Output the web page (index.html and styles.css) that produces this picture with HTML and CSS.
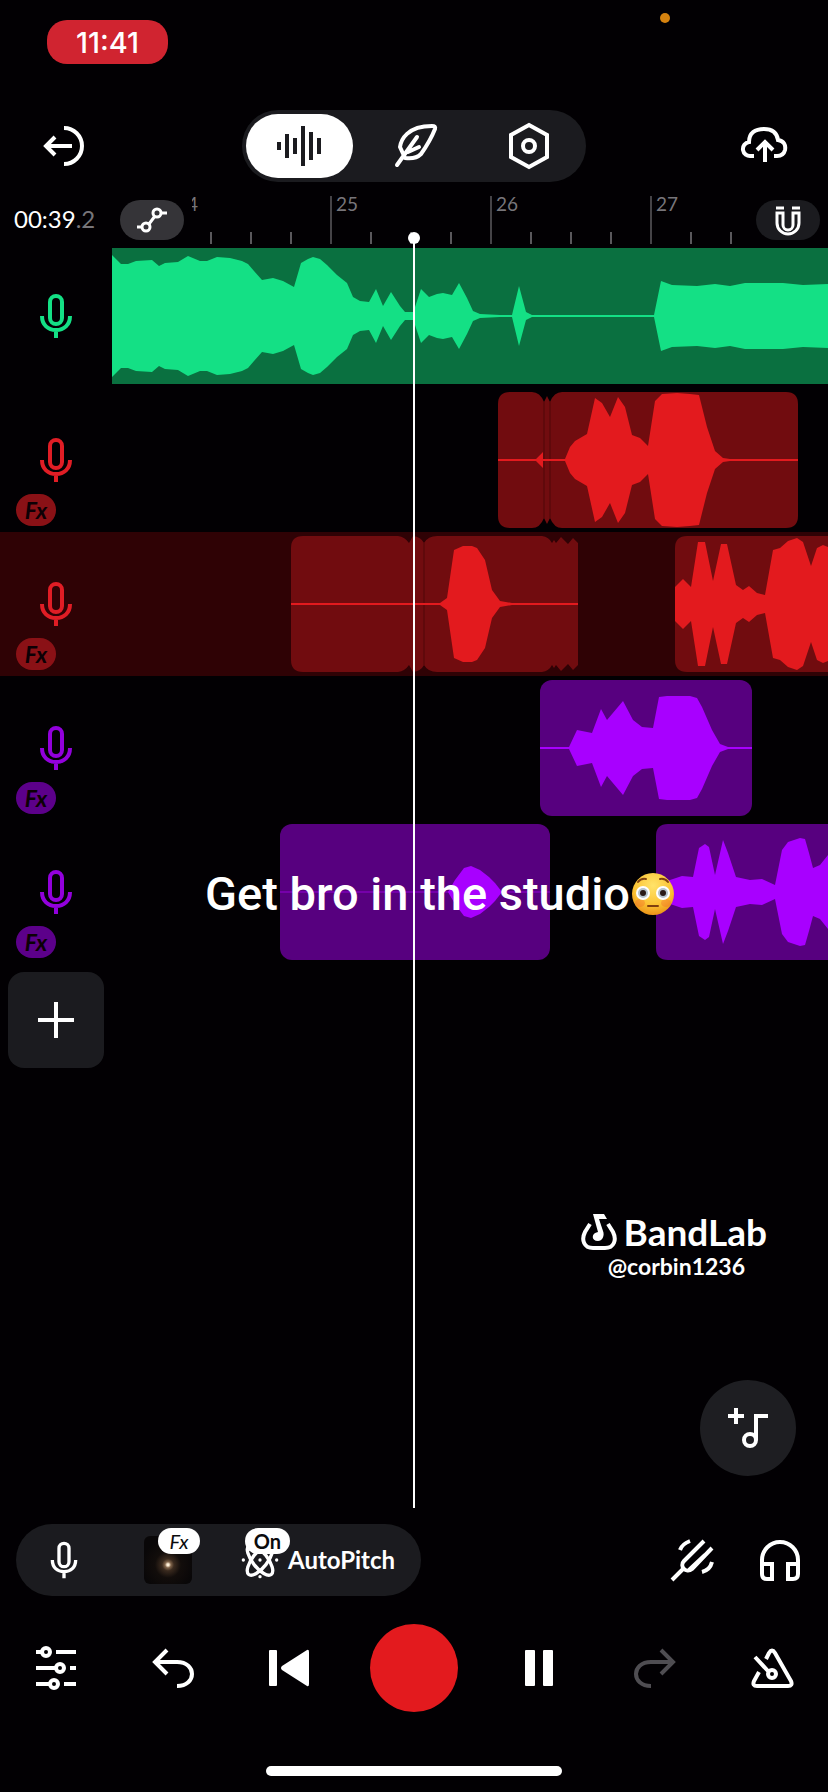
FILE: index.html
```html
<!DOCTYPE html>
<html lang="en">
<head>
<meta charset="utf-8">
<meta name="viewport" content="width=device-width, initial-scale=1">
<title>Studio</title>
<link rel="stylesheet" href="styles.css">
</head>
<body>
<svg class="defs" width="0" height="0" aria-hidden="true">
  <symbol id="mic" viewBox="0 0 48 48">
    <rect x="18" y="4" width="12" height="28" rx="6"/>
    <path d="M10 24C10 33 16 38 24 38S38 33 38 24M24 38V46"/>
  </symbol>
</svg>
<div class="app">
  <div class="status">
    <span class="clock">11:41</span>
    <span class="mic-dot"></span>
  </div>

  <header class="header">
    <button class="icon-btn back" aria-label="Exit">
      <svg class="icon" viewBox="0 0 48 48"><path d="M24 6A18 18 0 0 1 24 42M32 24H7M15 15L6 24L15 33"/></svg>
    </button>
    <nav class="tabs">
      <button class="tab active" aria-label="Tracks">
        <svg class="icon" viewBox="0 0 48 48"><path d="M4 20V28M12 12V36M20 16V32M28 4V44M36 10V38M44 16V32"/></svg>
      </button>
      <button class="tab" aria-label="Lyrics">
        <svg class="icon feather" viewBox="0 0 48 48"><path d="M10 25C11 18 17 4 42 4Q46 4 45 7C41 17 36 25 31 32C27 36 22 37 15 36ZM7 43L27 15M18 30L29 25"/></svg>
      </button>
      <button class="tab" aria-label="Settings">
        <svg class="icon" viewBox="0 0 48 48"><path d="M24 3L42 13V35L24 45L6 35V13Z"/><circle cx="24" cy="24" r="6"/></svg>
      </button>
    </nav>
    <button class="icon-btn upload" aria-label="Publish">
      <svg class="icon" viewBox="0 0 48 48"><path d="M14 34H11A7 7 0 0 1 9 20C9 11 15 7 24 7C32 7 37 11 38 18C44 19 46 23 45 28C44 32 41 34 37 34H34M25 40V21M17 28L25 20L33 28"/></svg>
    </button>
  </header>

  <div class="ruler-row">
    <div class="time">00:39<span class="tenth">.2</span></div>
    <button class="pill automation" aria-label="Automation">
      <svg class="icon" viewBox="4 4 40 40"><path d="M9 31H14M21 28L27 20M33 17H39"/><circle cx="18" cy="31" r="4"/><circle cx="29" cy="17" r="4"/></svg>
    </button>
    <div class="ruler">
      <div class="bars">
        <span class="bar">24</span><span class="bar">25</span><span class="bar">26</span><span class="bar">27</span>
      </div>
    </div>
    <button class="pill magnet" aria-label="Snap to grid">
      <svg class="icon" viewBox="4 4 40 40"><path d="M12 12H20M28 12H36"/><path d="M13 17H19V29A5 5 0 0 0 29 29V17H35V27A11 11 0 0 1 13 27Z"/></svg>
    </button>
  </div>

  <main class="arranger">
    <section class="track green">
      <button class="head" aria-label="Track 1"><svg class="icon"><use href="#mic"/></svg></button>
      <svg class="lane" viewBox="112 -68 716 136" preserveAspectRatio="xMinYMid slice">
        <rect class="clip" x="112" y="-68" width="716" height="136"/>
        <g class="wave">
          <path id="w1" d="M112 1V-61L121 -52L128 -52L136 -55L152 -56L159 -50L165 -53L178 -54L188 -60L200 -55L207 -55L217 -59L230 -58L242 -55L248 -52L254 -45L262 -36L273 -38L283 -35L294 -29L301 -53L308 -57L313 -59L320 -57L327 -51L337 -41L347 -33L353 -19L360 -15L369 -14L376 -27L383 -10L391 -24L400 -10L405 -4H414L415 -9L421 -27L429 -19L437 -22L443 -23L452 -21L459 -33L467 -18L473 -5L480 -2L500 -1H512L519 -30L526 -4L532 -1H654L661 -35L672 -31L697 -30L715 -32L730 -30L745 -33L783 -33L803 -31L828 -32V1Z"/>
          <use href="#w1" transform="scale(1 -1)"/>
        </g>
      </svg>
    </section>

    <section class="track red">
      <button class="head" aria-label="Track 2"><svg class="icon"><use href="#mic"/></svg><span class="fx">Fx</span></button>
      <svg class="lane" viewBox="112 -68 716 136" preserveAspectRatio="xMinYMid slice">
        <path class="clip" d="M498 -56Q498 -68 510 -68H532Q540 -68 544 -58L547 -64L550 -58Q554 -68 562 -68H786Q798 -68 798 -56V56Q798 68 786 68H562Q554 68 550 58L547 64L544 58Q540 68 532 68H510Q498 68 498 56Z"/>
        <path class="seam" d="M544 -58V58M550 -58V58"/>
        <g class="wave">
          <path id="w2" d="M498 1V-1H536L543 -8V-1H565L570 -13L575 -19L587 -26L595 -62L602 -57L610 -43L618 -63L625 -53L632 -25L640 -22L648 -14L655 -59L662 -66L677 -67L690 -66L699 -65L707 -33L715 -9L723 -2L730 -1H798V1Z"/>
          <use href="#w2" transform="scale(1 -1)"/>
        </g>
      </svg>
    </section>

    <section class="track red selected">
      <button class="head" aria-label="Track 3"><svg class="icon"><use href="#mic"/></svg><span class="fx">Fx</span></button>
      <svg class="lane" viewBox="112 -68 716 136" preserveAspectRatio="xMinYMid slice">
        <path class="clip" d="M291 -56Q291 -68 303 -68H398Q405 -67 409 -61L413 -68Q421 -67 424 -61Q428 -68 437 -68H542Q549 -67 552 -61L554 -64L556 -61L561 -67L568 -60L573 -66L578 -61V61L573 66L568 60L561 67L556 61L554 64L552 61Q549 67 542 68H437Q428 68 424 61Q421 67 413 68L409 61Q405 67 398 68H303Q291 68 291 56Z"/>
        <path class="clip" d="M675 -56Q675 -68 687 -68H830V68H687Q675 68 675 56Z"/>
        <path class="seam" d="M424 -61V61"/>
        <g class="wave">
          <path id="w3" d="M291 1V-1H440L447 -6L454 -54L463 -58L472 -58L477 -56L485 -44L492 -14L500 -3L512 -1H578V1ZM675 1V-17L683 -25L691 -17L698 -62L705 -62L713 -23L721 -60L727 -60L736 -19L743 -14L749 -18L757 -11L765 -9L773 -54L780 -56L788 -63L797 -66L803 -62L811 -38L817 -56L823 -59L828 -57V1Z"/>
          <use href="#w3" transform="scale(1 -1)"/>
        </g>
      </svg>
    </section>

    <section class="track purple">
      <button class="head" aria-label="Track 4"><svg class="icon"><use href="#mic"/></svg><span class="fx">Fx</span></button>
      <svg class="lane" viewBox="112 -68 716 136" preserveAspectRatio="xMinYMid slice">
        <rect class="clip" x="540" y="-68" width="212" height="136" rx="12"/>
        <g class="wave">
          <path id="w4" d="M540 1V-1H569L577 -18L592 -15L601 -39L607 -28L623 -47L633 -28L642 -21L653 -20L659 -51L667 -52L690 -52L697 -50L702 -41L712 -18L720 -4L728 -1H752V1Z"/>
          <use href="#w4" transform="scale(1 -1)"/>
        </g>
      </svg>
    </section>

    <section class="track purple">
      <button class="head" aria-label="Track 5"><svg class="icon"><use href="#mic"/></svg><span class="fx">Fx</span></button>
      <svg class="lane" viewBox="112 -68 716 136" preserveAspectRatio="xMinYMid slice">
        <rect class="clip" x="280" y="-68" width="270" height="136" rx="12"/>
        <path class="clip" d="M656 -56Q656 -68 668 -68H830V68H668Q656 68 656 56Z"/>
        <path class="faint" d="M280 0H550"/>
        <g class="wave">
          <path id="w5" d="M448 0L455 -12L464 -24L471 -26L480 -22L489 -15L495 -9L502 0ZM656 1V-8L670 -12L682 -16L693 -15L699 -44L705 -48L709 -45L715 -17L723 -52L728 -39L736 -15L750 -12L762 -13L775 -7L782 -42L788 -50L800 -54L805 -53L809 -39L813 -24L820 -27L828 -37V1Z"/>
          <use href="#w5" transform="scale(1 -1)"/>
        </g>
      </svg>
    </section>

    <button class="add" aria-label="Add track">
      <svg class="icon" viewBox="0 0 48 48"><path d="M24 6V42M6 24H42"/></svg>
    </button>

    <div class="playhead"></div>
    <div class="caption">Get bro in the studio<svg class="emoji" viewBox="0 0 44 44" role="img" aria-label="flushed face">
      <defs><radialGradient id="face" cx=".5" cy=".3" r=".75"><stop offset="0" stop-color="#ffe36a"/><stop offset=".6" stop-color="#fcc435"/><stop offset="1" stop-color="#e88a12"/></radialGradient></defs>
      <circle cx="22" cy="22" r="21" fill="url(#face)"/>
      <ellipse cx="9" cy="31" rx="5" ry="4" fill="#f0642a" opacity=".35"/><ellipse cx="35" cy="31" rx="5" ry="4" fill="#f0642a" opacity=".35"/>
      <circle cx="12" cy="21" r="7" fill="#fff"/><circle cx="32" cy="21" r="7" fill="#fff"/>
      <circle cx="12" cy="21" r="5" fill="#b5c3cd"/><circle cx="32" cy="21" r="5" fill="#b5c3cd"/>
      <circle cx="12" cy="21" r="3" fill="#2b1b18"/><circle cx="32" cy="21" r="3" fill="#2b1b18"/>
      <path d="M7 10Q10 6 15 7M29 7Q34 6 37 10M17 34H27" fill="none" stroke="#80400f" stroke-width="2" stroke-linecap="round"/>
    </svg></div>
    <div class="watermark">
      <div class="brand">
        <svg class="logo" viewBox="0 0 36 36"><path d="M9 10L4 18C0 26 3 34 12 34H24C33 34 36 26 32 18L27 10" fill="none" stroke="#fff" stroke-width="4"/><path d="M12 0H23L26 5H18L22 17C24 22 21 27 17 27C10 27 10 19 17 18Z" fill="#fff"/></svg>
        <span>BandLab</span>
      </div>
      <div class="handle">@corbin1236</div>
    </div>
    <button class="fab" aria-label="Add sound">
      <svg class="icon" viewBox="0 0 48 48"><path d="M4 12H20M12 4V20M44 12H32V36"/><circle cx="26" cy="36" r="6"/></svg>
    </button>
  </main>

  <div class="tools">
    <div class="chain">
      <button class="icon-btn" aria-label="Input"><svg class="icon"><use href="#mic"/></svg></button>
      <button class="preset" aria-label="Effects preset"><span class="badge fx-badge">Fx</span></button>
      <button class="autopitch">
        <svg class="icon" viewBox="0 0 48 48"><ellipse cx="24" cy="24" rx="9" ry="22" transform="rotate(38 24 24)"/><ellipse cx="24" cy="24" rx="9" ry="22" transform="rotate(-38 24 24)"/><g class="dots"><circle cx="24" cy="24" r="2"/><circle cx="4" cy="24" r="2"/><circle cx="44" cy="24" r="2"/><circle cx="24" cy="44" r="2"/></g></svg>
        <span class="badge on-badge">On</span>
        <span>AutoPitch</span>
      </button>
    </div>
    <div class="monitor">
      <button class="icon-btn" aria-label="Tuner">
        <svg class="icon" viewBox="0 0 48 48"><path d="M4 44L15 33M36 5L16 25C11 30 18 38 24 33L44 12M37 19L21 34M12 14Q14 8 22 5M44 26Q42 34 34 36"/></svg>
      </button>
      <button class="icon-btn" aria-label="Monitoring">
        <svg class="icon" viewBox="0 0 48 48"><path d="M6 30V24A18 18 0 0 1 42 24V30M6 30V38Q6 43 11 43H16V28H6M42 30V38Q42 43 37 43H32V28H42"/></svg>
      </button>
    </div>
  </div>

  <footer class="transport">
    <button class="icon-btn" aria-label="Mixer">
      <svg class="icon" viewBox="0 0 48 48"><path d="M4 8H9M24 8H44M4 24H23M38 24H44M4 40H17M32 40H44"/><circle cx="14" cy="8" r="4"/><circle cx="28" cy="24" r="4"/><circle cx="22" cy="40" r="4"/></svg>
    </button>
    <button class="icon-btn" aria-label="Undo">
      <svg class="icon" viewBox="0 0 48 48"><path d="M28 42C48 42 48 18 28 18H6M18 6L6 18L18 30"/></svg>
    </button>
    <button class="icon-btn" aria-label="Back to start">
      <svg class="icon solid" viewBox="0 0 48 48"><rect x="4" y="6" width="8" height="36" rx="1"/><path d="M42 6Q44 5 44 8V40Q44 43 42 42L17 26Q15 24 17 22Z"/></svg>
    </button>
    <button class="record" aria-label="Record"></button>
    <button class="icon-btn" aria-label="Pause">
      <svg class="icon solid" viewBox="0 0 48 48"><rect x="10" y="6" width="10" height="36" rx="1"/><rect x="28" y="6" width="10" height="36" rx="1"/></svg>
    </button>
    <button class="icon-btn" aria-label="Redo" disabled>
      <svg class="icon" viewBox="0 0 48 48"><path d="M20 42C0 42 0 18 20 18H42M30 6L42 18L30 30"/></svg>
    </button>
    <button class="icon-btn" aria-label="Metronome">
      <svg class="icon" viewBox="0 0 48 48"><path d="M18 15L21 9Q24 4 27 9L43 37Q45 42 40 42H9Q4 42 6 37L11 28M7 13L20 27"/><circle cx="24" cy="30" r="4"/></svg>
    </button>
  </footer>
  <div class="home"><span></span></div>
</div>
</body>
</html>
```
FILE: styles.css
```css
* { box-sizing: border-box; }
body {
  margin: 0;
  background: #020003;
  color: #fff;
  font-family: Lato, "Open Sans", sans-serif;
}
button {
  margin: 0;
  padding: 0;
  border: 0;
  background: none;
  color: inherit;
  font: inherit;
}
.defs { position: absolute; }
.app {
  display: flex;
  flex-direction: column;
  min-height: 100vh;
}
.icon {
  display: block;
  width: 48px;
  height: 48px;
  fill: none;
  stroke: currentColor;
  stroke-width: 4;
}
.icon.solid { fill: currentColor; stroke: none; }
.icon-btn {
  display: grid;
  place-items: center;
  width: 72px;
  height: 72px;
}

/* Status bar and header */
.status {
  display: flex;
  justify-content: space-between;
  height: 110px;
  padding: 13px 158px 0 47px;
}
.clock {
  width: 121px;
  height: 44px;
  margin-top: 7px;
  border-radius: 20px;
  background: #d02430;
  font: 500 29px/45px Inter, sans-serif;
  text-align: center;
}
.mic-dot {
  width: 10px;
  height: 10px;
  border-radius: 50%;
  background: #d5820f;
}
.header {
  display: grid;
  grid-template-columns: 1fr 344px 1fr;
  align-items: center;
  padding: 0 28px;
}
.upload { justify-self: end; }
.tabs {
  display: flex;
  gap: 8px;
  padding: 4px;
  border-radius: 36px;
  background: #1b1b1f;
}
.tab {
  display: grid;
  flex: 1;
  place-items: center;
  height: 64px;
  border-radius: 32px;
}
.tab.active { background: #fff; color: #1b1b1f; }
.feather { stroke-linejoin: round; stroke-linecap: round; }

/* Ruler */
.ruler-row {
  display: flex;
  height: 62px;
  padding: 0 8px 0 14px;
}
.time {
  width: 106px;
  font-size: 24px;
  line-height: 74px;
}
.tenth { color: #77757a; }
.pill {
  display: grid;
  place-items: center;
  width: 64px;
  height: 40px;
  margin-top: 18px;
  border-radius: 20px;
  background: #1b1b1f;
}
.automation { background: #353438; }
.pill .icon { width: 40px; height: 40px; stroke-width: 3; }
.ruler {
  flex: 1;
  min-width: 0;
  margin: 10px 12px 0 8px;
  overflow: hidden;
}
.bars { display: flex; margin-left: -22px; }
.bar {
  flex: 0 0 160px;
  height: 52px;
  padding-left: 6px;
  background:
    linear-gradient(#454347, #454347) left bottom / 2px 48px no-repeat,
    repeating-linear-gradient(90deg, transparent 0 38px, #5a585c 38px 40px) left 2px bottom / 120px 12px no-repeat;
  color: #77757a;
  font-size: 19px;
  line-height: 24px;
}

/* Tracks */
.arranger {
  position: relative;
  flex: 1;
}
.track {
  display: grid;
  grid-template-columns: 112px 1fr;
  height: 144px;
  padding: 4px 0;
}
.green { --main: #14e085; --clip: #0a7040; --icon: #14e085; }
.red { --main: #e31a1e; --clip: #710c0f; --icon: #e01d25; --badge: #8a1116; }
.purple { --main: #a800ff; --clip: #57007f; --icon: #9200dc; --badge: #5c008a; }
.selected { background: #2f0205; }
.head {
  position: relative;
  display: grid;
  place-items: center;
  color: var(--icon);
}
.fx {
  position: absolute;
  left: 16px;
  bottom: 2px;
  width: 40px;
  height: 32px;
  border-radius: 16px;
  background: var(--badge);
  color: #0c0005;
  font-size: 23px;
  font-style: italic;
  font-weight: 700;
  line-height: 32px;
}
.lane { display: block; width: 100%; height: 136px; }
.clip { fill: var(--clip); }
.wave { fill: var(--main); }
.seam { stroke: #500609; stroke-width: 1; }
.faint { stroke: #7500aa; stroke-width: 2; }
.add {
  display: grid;
  place-items: center;
  width: 96px;
  height: 96px;
  margin: 8px;
  border-radius: 16px;
  background: #1b1b1f;
}
.playhead {
  position: absolute;
  top: -6px;
  bottom: 0;
  left: 50%;
  width: 2px;
  margin-left: -1px;
  background: #fff;
}
.playhead::before {
  content: "";
  position: absolute;
  top: -6px;
  left: -5px;
  width: 12px;
  height: 12px;
  border-radius: 50%;
  background: #fff;
}
.caption {
  position: absolute;
  top: 622px;
  left: 205px;
  display: flex;
  align-items: center;
  gap: 1px;
  font: 500 46px/56px Roboto, sans-serif;
  font-size: 47px;
  white-space: nowrap;
}
.emoji { width: 44px; height: 44px; }
.watermark {
  position: absolute;
  right: 61px;
  bottom: 228px;
  font-weight: 700;
}
.brand {
  display: flex;
  align-items: center;
  gap: 7px;
  font-size: 37px;
  line-height: 40px;
}
.logo { width: 36px; height: 36px; }
.handle {
  padding-right: 22px;
  font-size: 23px;
  line-height: 28px;
  text-align: right;
}
.fab {
  position: absolute;
  right: 32px;
  bottom: 32px;
  display: grid;
  place-items: center;
  width: 96px;
  height: 96px;
  border-radius: 50%;
  background: #1e1e22;
}

/* Bottom controls */
.tools {
  display: flex;
  justify-content: space-between;
  padding: 16px 12px 0 16px;
}
.chain {
  display: flex;
  align-items: center;
  height: 72px;
  padding: 0 26px 0 12px;
  border-radius: 36px;
  background: #1b1b1f;
}
.chain .icon { width: 40px; height: 40px; }
.preset {
  position: relative;
  width: 48px;
  height: 48px;
  margin: 0 48px 0 44px;
  border-radius: 6px;
  background: radial-gradient(circle at 50% 60%, #fff0d8 0 1px, #80644a 3px, #3a2a1e 6px, #120d0b 13px, #090708 26px);
}
.badge {
  position: absolute;
  height: 26px;
  border-radius: 13px;
  background: #fff;
  color: #0b0b0d;
  font-size: 20px;
  line-height: 26px;
  text-align: center;
}
.fx-badge {
  top: -8px;
  left: 14px;
  width: 42px;
  font-style: italic;
}
.on-badge {
  top: -12px;
  left: 5px;
  width: 45px;
}
.autopitch {
  position: relative;
  display: flex;
  align-items: center;
  gap: 8px;
  font-size: 24px;
  font-weight: 700;
  line-height: 40px;
}
.autopitch .dots { fill: currentColor; stroke: none; }
.monitor { display: flex; gap: 16px; }
.transport {
  display: flex;
  align-items: center;
  justify-content: space-between;
  padding: 28px 20px 0;
}
.transport button:disabled { color: #4f4d52; }
.record {
  width: 88px;
  height: 88px;
  border-radius: 50%;
  background: #e31a1e;
}
.home {
  display: flex;
  justify-content: center;
  padding: 54px 0 16px;
}
.home span {
  width: 296px;
  height: 10px;
  border-radius: 5px;
  background: #fff;
}
```
